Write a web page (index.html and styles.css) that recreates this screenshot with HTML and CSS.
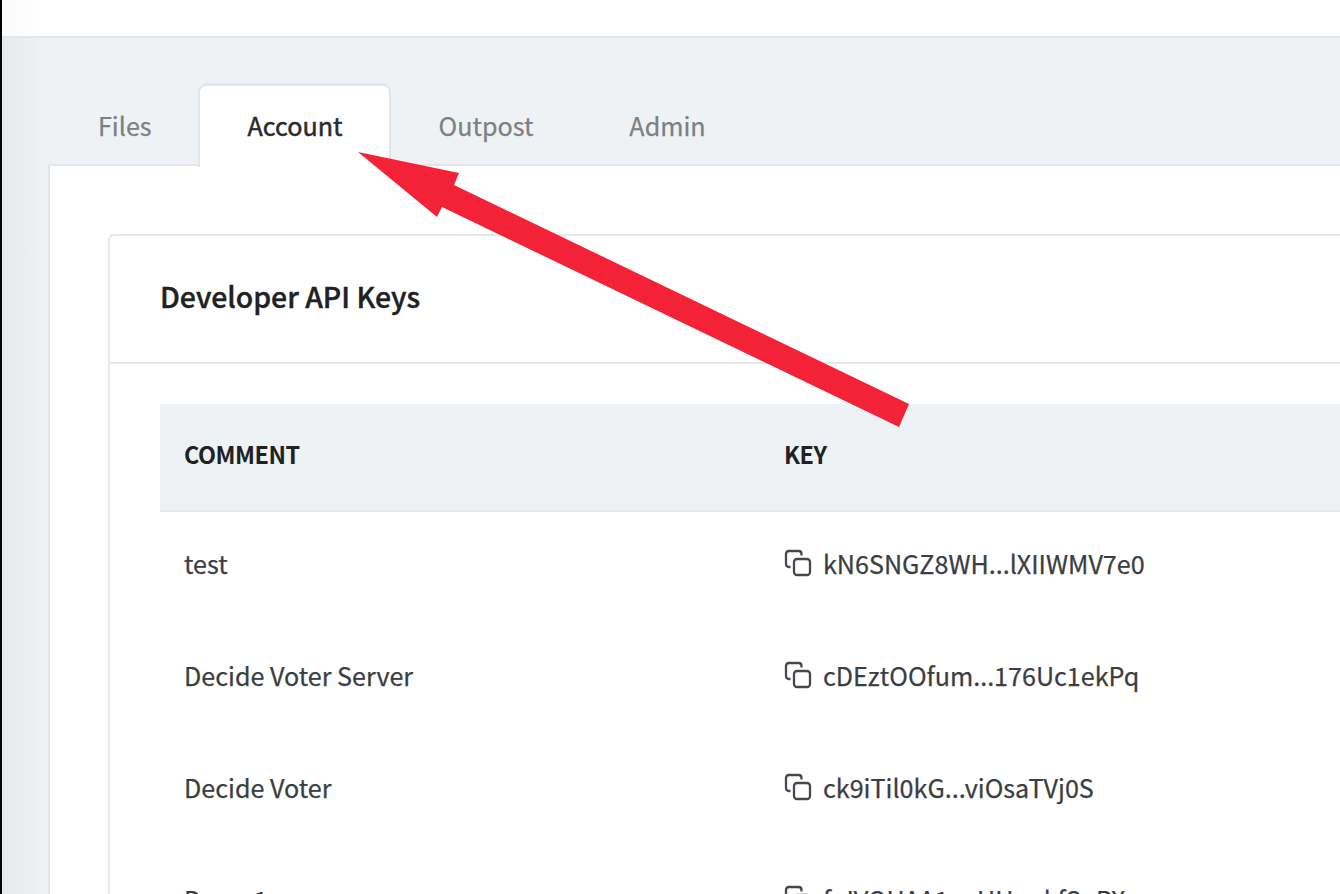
FILE: index.html
```html
<!DOCTYPE html>
<html lang="en">
<head>
<meta charset="utf-8">
<title>Account</title>
<link rel="stylesheet" href="styles.css">
</head>
<body>
<svg class="defs" width="0" height="0"><symbol id="copy" viewBox="0 0 28 28"><path d="M6.500 18H5Q2 18 2 15V5Q2 2 5 2H14.500Q17.500 2 17.500 5V6.500"/><rect x="10" y="10" width="16" height="16" rx="3"/></symbol></svg>
<div class="window">
  <header class="topbar"></header>
  <nav class="tabs">
    <a class="tab">Files</a>
    <a class="tab active">Account</a>
    <a class="tab">Outpost</a>
    <a class="tab">Admin</a>
  </nav>
  <main class="panel">
    <section class="card">
      <h2 class="card-title">Developer API Keys</h2>
      <div class="table">
        <div class="row head"><span class="cell">COMMENT</span><span class="cell">KEY</span></div>
        <div class="row"><span class="cell">test</span><span class="cell"><svg class="icon"><use href="#copy"/></svg><span>kN6SNGZ8WH...lXIIWMV7e0</span></span></div>
        <div class="row"><span class="cell">Decide Voter Server</span><span class="cell"><svg class="icon"><use href="#copy"/></svg><span>cDEztOOfum...176Uc1ekPq</span></span></div>
        <div class="row"><span class="cell">Decide Voter</span><span class="cell"><svg class="icon"><use href="#copy"/></svg><span>ck9iTil0kG...viOsaTVj0S</span></span></div>
        <div class="row"><span class="cell">Demo1</span><span class="cell"><svg class="icon"><use href="#copy"/></svg><span>fuIVOUAA1r...UUookfSoPX</span></span></div>
      </div>
    </section>
  </main>
</div>
<svg class="arrow" width="1340" height="894"><polygon points="358,152 459,173 454,185 909,404 899,427 442,207 437,217"/></svg>
</body>
</html>
```
FILE: styles.css
```css
* { box-sizing: border-box; }
body { margin: 0; height: 894px; overflow: hidden; font-family: "Noto Sans CJK SC", "Noto Sans", sans-serif; font-size: 25.12px; color: #3a3e42; -webkit-text-stroke: .25px; }
.defs { position: absolute; }
.window { height: 894px; display: flex; flex-direction: column; overflow: hidden; border-left: 2px solid #000; background: linear-gradient(90deg, rgba(40,50,60,.045), rgba(40,50,60,0) 42px) #eef2f5; }
.topbar { flex: none; height: 38px; border-bottom: 2px solid #e2e5e9; background: linear-gradient(90deg, #f9faf9, #fff 42px); }
.tabs { flex: none; display: flex; height: 126px; padding: 45px 0 0 48px; }
.tab { height: 81px; padding: 3px 48px 0; display: flex; align-items: center; line-height: 36px; color: #7c8083; }
.tab.active { width: 193px; height: 84px; margin: 0 0 0 -2px; background: #fff; border: 2px solid #e2e5e9; border-top-width: 3px; border-bottom: 0; border-radius: 9px 9px 0 0; padding: 0 45px 4px 48px; color: #292b2d; -webkit-text-stroke: .5px; z-index: 1; }
.panel { flex: 1; margin-left: 46px; padding: 68px 0 0 58px; background: #fff; border: 2px solid #e2e5e9; border-right: 0; }
.card { height: 760px; border: 2px solid #e5e7ea; border-right: 0; border-radius: 6px 0 0 0; }
.card-title { margin: 0; height: 128px; padding: 0 0 8px 50px; display: flex; align-items: center; border-bottom: 2px solid #e5e7ea; font-size: 28.4px; font-weight: 500; color: #202122; -webkit-text-stroke: .4px; }
.table { padding: 40px 0 0 50px; }
.row { display: grid; grid-template-columns: 600px 1fr; height: 112px; padding: 0 0 10px 24px; }
.row.head { height: 108px; padding-bottom: 6px; background: #eef2f5; border-bottom: 2px solid #e2e5e9; color: #202122; font-size: 23.4px; font-weight: 700; letter-spacing: -.45px; -webkit-text-stroke: 0; }
.cell { display: flex; align-items: center; white-space: pre; }
.icon { width: 28px; height: 28px; margin-right: 11px; fill: none; stroke: #45494d; stroke-width: 2.3; }
.arrow { position: absolute; left: 0; top: 0; z-index: 2; fill: #f32236; }
```
